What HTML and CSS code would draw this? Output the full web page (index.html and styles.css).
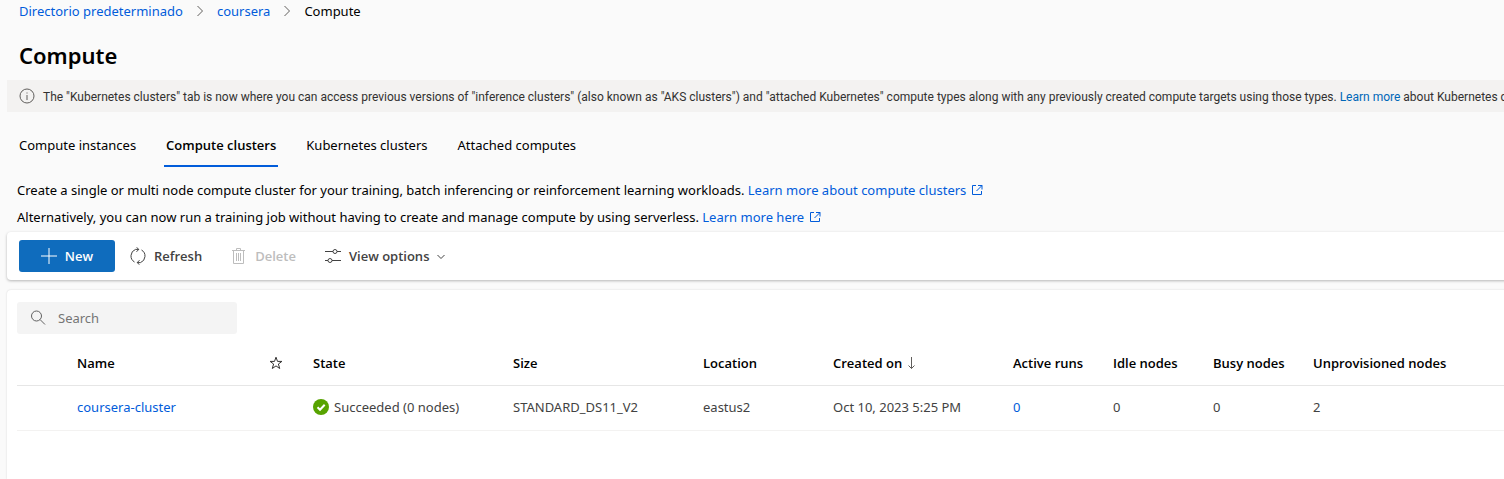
FILE: index.html
```html
<!DOCTYPE html>
<html lang="en">
<head>
<meta charset="utf-8">
<title>Compute</title>
<link rel="stylesheet" href="styles.css">
</head>
<body>
<header class="page-header">
  <nav class="breadcrumb" aria-label="Breadcrumb">
    <a href="#">Directorio predeterminado</a>
    <svg class="crumb-sep" viewBox="0 0 6 12" aria-hidden="true"><path d="M.5 1l5 5-5 5"/></svg>
    <a href="#">coursera</a>
    <svg class="crumb-sep" viewBox="0 0 6 12" aria-hidden="true"><path d="M.5 1l5 5-5 5"/></svg>
    <span>Compute</span>
  </nav>
  <h1 class="title">Compute</h1>
</header>

<div class="banner">
  <svg class="banner-icon" viewBox="0 0 16 16" aria-hidden="true"><circle cx="8" cy="8" r="7"/><path d="M8 7v5M8 4.500v1"/></svg>
  <p class="banner-text">The "Kubernetes clusters" tab is now where you can access previous versions of "inference clusters" (also known as "AKS clusters") and "attached Kubernetes" compute types along with any previously created compute targets using those types. <a href="#">Learn more</a> about Kubernetes clusters</p>
</div>

<div class="tabs" role="tablist">
  <button class="tab" role="tab" aria-selected="false">Compute instances</button>
  <button class="tab tab-active" role="tab" aria-selected="true">Compute clusters</button>
  <button class="tab" role="tab" aria-selected="false">Kubernetes clusters</button>
  <button class="tab" role="tab" aria-selected="false">Attached computes</button>
</div>

<section class="intro">
  <p>Create a single or multi node compute cluster for your training, batch inferencing or reinforcement learning workloads. <a href="#">Learn more about compute clusters<svg class="external" viewBox="0 0 12 12" aria-hidden="true"><path d="M5 1.500H1.500v9h9V7M7 1.500h4V5.500M11 1.500L5.500 7"/></svg></a></p>
  <p>Alternatively, you can now run a training job without having to create and manage compute by using serverless. <a href="#">Learn more here<svg class="external" viewBox="0 0 12 12" aria-hidden="true"><path d="M5 1.500H1.500v9h9V7M7 1.500h4V5.500M11 1.500L5.500 7"/></svg></a></p>
</section>

<div class="toolbar" role="toolbar">
  <button class="btn btn-primary"><svg class="icon" viewBox="0 0 16 16" aria-hidden="true"><path d="M8 0v16M0 8h16"/></svg>New</button>
  <button class="btn btn-refresh"><svg class="icon icon-refresh" viewBox="0 0 16 18" aria-hidden="true"><path d="M4.500 15A7 7 0 0 1 5.500 2.400H8.800M6.500 .3L8.800 2.400 6.500 4.800M11.500 3A7 7 0 0 1 10.500 15.600H7.200M9.500 17.700L7.200 15.600 9.500 13.200"/></svg>Refresh</button>
  <button class="btn btn-delete" disabled><svg class="icon" viewBox="0 0 16 16" aria-hidden="true"><path d="M1 2.500h13M5.500 2.500v-2h4v2M2.500 2.500v13h10v-13M5.500 5v8M7.500 5v8M9.500 5v8"/></svg>Delete</button>
  <button class="btn btn-view"><svg class="icon" viewBox="0 0 16 16" aria-hidden="true"><path d="M0 3.500h8M12 3.500h4M0 12.500h3M7 12.500h9"/><circle cx="10" cy="3.500" r="2"/><circle cx="5" cy="12.500" r="2"/></svg>View options<svg class="chevron" viewBox="0 0 8 8" aria-hidden="true"><path d="M.5 3L4 6.500l3.500-3.500"/></svg></button>
</div>

<main class="panel">
  <label class="search">
    <svg class="icon" viewBox="0 0 16 16" aria-hidden="true"><circle cx="6.500" cy="6" r="5"/><path d="M10 9.500l5 5"/></svg>
    <input type="search" placeholder="Search" aria-label="Search">
  </label>
  <table class="grid">
    <colgroup>
      <col class="c-select"><col class="c-name"><col class="c-star"><col class="c-state"><col class="c-size"><col class="c-location"><col class="c-created"><col class="c-count"><col class="c-count"><col class="c-count"><col>
    </colgroup>
    <thead>
      <tr>
        <th></th>
        <th scope="col">Name</th>
        <th scope="col" aria-label="Favorite"><svg class="star" viewBox="0 0 14 14" aria-hidden="true"><path d="M7 1.200l1.500 4.200h4.400L9.400 8l1.300 4.500L7 9.900l-3.700 2.600L4.600 8 1.100 5.400h4.400z"/></svg></th>
        <th scope="col">State</th>
        <th scope="col">Size</th>
        <th scope="col">Location</th>
        <th scope="col"><span class="with-icon">Created on<svg class="sort" viewBox="0 0 8 12" aria-hidden="true"><path d="M4.500 0v11.500M1.500 8.500l3 3 3-3"/></svg></span></th>
        <th scope="col">Active runs</th>
        <th scope="col">Idle nodes</th>
        <th scope="col">Busy nodes</th>
        <th scope="col">Unprovisioned nodes</th>
      </tr>
    </thead>
    <tbody>
      <tr>
        <td></td>
        <td><a href="#">coursera-cluster</a></td>
        <td></td>
        <td><span class="with-icon"><svg class="status" viewBox="0 0 16 16" aria-hidden="true"><circle cx="8" cy="8" r="8"/><path d="M4.500 8.300l2.500 2.500 4.700-5"/></svg>Succeeded (0 nodes)</span></td>
        <td>STANDARD_DS11_V2</td>
        <td>eastus2</td>
        <td>Oct 10, 2023 5:25 PM</td>
        <td><a href="#">0</a></td>
        <td>0</td>
        <td>0</td>
        <td>2</td>
      </tr>
    </tbody>
  </table>
</main>
</body>
</html>
```
FILE: styles.css
```css
* { box-sizing: border-box; }

body {
  margin: 0;
  min-height: 100vh;
  display: flex;
  flex-direction: column;
  overflow-x: hidden;
  background: #fafafa;
  color: #000;
  font: 13px/20px "Noto Sans", "Open Sans", sans-serif;
}

a { color: #015cda; text-decoration: none; }
p { margin: 0; }
button, input { font: inherit; color: inherit; }
svg { flex: none; fill: none; stroke: currentColor; }

.page-header { padding: 1px 19px 0; }
.breadcrumb { display: flex; align-items: center; gap: 14px; }
.crumb-sep { width: 6px; height: 12px; color: #605e5c; }
.title { margin: 18px 0 9px; font-size: 22px; line-height: 32px; font-weight: 600; }

.banner {
  display: flex;
  align-items: center;
  gap: 8px;
  height: 32px;
  margin-left: 7px;
  padding-left: 12px;
  overflow: hidden;
  background: #f3f2f1;
  color: #323130;
  font-family: Roboto, sans-serif;
  font-size: 12px;
}
.banner-icon { width: 16px; height: 16px; color: #605e5c; }
.banner-text { white-space: nowrap; padding-top: 2px; }
.banner a { color: #0067b8; }

.tabs { display: flex; gap: 26px; padding: 12px 17px 0; }
.tab {
  height: 43px;
  padding: 0 2px;
  border: 0;
  border-bottom: 2px solid transparent;
  background: none;
}
.tab-active { border-color: #015cda; font-family: "Open Sans", sans-serif; font-weight: 600; }

.intro { padding: 13px 17px 5px; }
.intro p + p { margin-top: 7px; }
.external { width: 12px; height: 12px; margin-left: 5px; vertical-align: -1px; }

.toolbar {
  display: flex;
  align-items: center;
  height: 48px;
  margin: 0 -8px 10px 7px;
  padding-left: 12px;
  border-radius: 4px;
  background: #fff;
  box-shadow: 0 1px 3px rgba(0, 0, 0, .28);
  color: #424242;
}
.btn {
  display: flex;
  align-items: center;
  gap: 8px;
  height: 32px;
  padding: 0;
  border: 0;
  border-radius: 3px;
  background: none;
  font-family: "Open Sans", sans-serif;
  font-weight: 600;
}
.icon { width: 16px; height: 16px; }
.icon-refresh { height: 18px; }
.btn-primary { width: 96px; justify-content: center; background: #0f6cbd; color: #fff; }
.btn-refresh { margin-left: 15px; }
.btn-delete { margin-left: 29px; color: #bdbdbd; }
.btn-view { margin-left: 29px; }
.chevron { width: 8px; height: 8px; }

.panel {
  flex: 1;
  margin: 0 -8px 0 7px;
  padding: 12px 8px 0 10px;
  border-radius: 4px 4px 0 0;
  background: #fff;
  box-shadow: 0 0 2px rgba(0, 0, 0, .16);
}
.search {
  display: flex;
  align-items: center;
  gap: 12px;
  width: 220px;
  height: 32px;
  padding: 0 13px;
  border-radius: 3px;
  background: #f4f4f4;
  color: #616161;
}
.search input { min-width: 0; flex: 1; padding: 0; border: 0; outline: 0; background: none; }
.search input::placeholder { color: #757575; opacity: 1; }

.grid { width: 100%; margin-top: 7px; table-layout: fixed; border-collapse: collapse; }
.grid th, .grid td { height: 44px; padding: 0 8px; text-align: left; white-space: nowrap; border-bottom: 1px solid #f3f2f1; }
.grid th { font-family: "Open Sans", sans-serif; font-weight: 600; border-color: #e6e6e6; }
.grid td { height: 45px; padding-bottom: 1px; color: #424242; }
.c-select { width: 52px; }
.c-name { width: 192px; }
.c-star { width: 44px; }
.c-state { width: 200px; }
.c-size { width: 190px; }
.c-location { width: 130px; }
.c-created { width: 180px; }
.c-count { width: 100px; }
.with-icon { display: flex; align-items: center; gap: 5px; }
.star { display: block; width: 14px; height: 14px; color: #323130; }
.sort { width: 8px; height: 12px; color: #605e5c; }
.status { width: 16px; height: 16px; }
.status circle { fill: #57a300; stroke: none; }
.status path { stroke: #fff; stroke-width: 2; }
```
